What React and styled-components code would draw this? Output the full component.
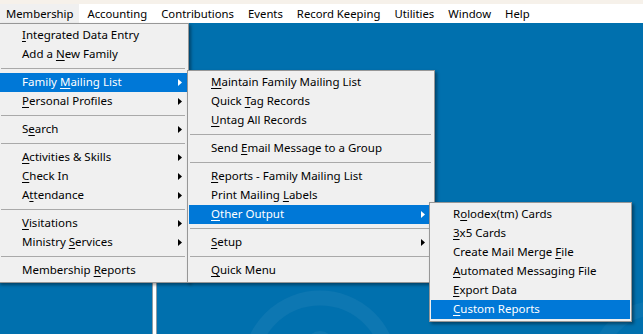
import React from "react";
import styled, { createGlobalStyle } from "styled-components";

const GlobalStyle = createGlobalStyle`
  html, body { margin: 0; padding: 0; background: #0070ae; }
  body { font-family: "Noto Sans", "Open Sans", sans-serif; font-size: 11.5px; color: #000; }
  * { box-sizing: border-box; }
`;

const Screen = styled.div`
  position: relative;
  width: 643px;
  height: 334px;
  overflow: hidden;
  display: flex;
  flex-direction: column;
  background: #0070ae;
`;

const TitleStrip = styled.div`
  flex: none;
  height: 4px;
  background: #f6f1ea;
`;

const MenuBar = styled.nav`
  flex: none;
  height: 19px;
  display: flex;
  align-items: stretch;
  gap: 2px;
  background: #ffffff;
  font-size: 11.3px;
`;

const BarItem = styled.div`
  display: flex;
  align-items: center;
  padding: 0 6px;
  white-space: nowrap;
  line-height: 19px;
  background: ${(p) => (p.$open ? "#f0f0f0" : "transparent")};
`;

const Desktop = styled.div`
  flex: 1;
  display: flex;
  min-height: 0;
`;

const SidePane = styled.div`
  flex: none;
  width: 152px;
  background: #0070ae;
`;

const Divider = styled.div`
  flex: none;
  width: 5px;
  background: #ffffff;
  border-left: 1px solid #8d9ba6;
  border-right: 1px solid #8d9ba6;
`;

const MainPane = styled.div`
  flex: 1;
  position: relative;
  overflow: hidden;
  background: #0070ae;
`;

const Watermark = styled.svg`
  position: absolute;
  left: 0;
  top: 0;
  width: 100%;
  height: 100%;
`;

const Menu = styled.div`
  position: absolute;
  left: ${(p) => p.$x}px;
  top: ${(p) => p.$y}px;
  width: ${(p) => p.$w}px;
  padding: 2px 1px;
  background: #f0f0f0;
  border: 1px solid #979797;
  box-shadow: 2px 2px 3px rgba(0, 0, 0, 0.4);
  z-index: ${(p) => p.$z};
`;

const Item = styled.div`
  position: relative;
  height: 19px;
  line-height: 17px;
  padding-left: 22px;
  white-space: nowrap;
  color: ${(p) => (p.$active ? "#ffffff" : "#000000")};
  background: ${(p) => (p.$active ? "#0078d7" : "transparent")};
`;

const Separator = styled.div`
  height: 1px;
  margin: 4px 2px 4px 1px;
  background: #a9a9a9;
`;

const Arrow = styled.svg`
  position: absolute;
  top: 6px;
  right: ${(p) => p.$inset}px;
  width: 4px;
  height: 7px;
  fill: ${(p) => (p.$active ? "#ffffff" : "#000000")};
`;

const Mnemonic = styled.span`
  text-decoration: underline;
  text-underline-offset: 2px;
`;

function Label({ text }) {
  const i = text.indexOf("_");
  if (i < 0) return text;
  return (
    <>
      {text.slice(0, i)}
      <Mnemonic>{text[i + 1]}</Mnemonic>
      {text.slice(i + 2)}
    </>
  );
}

const SEP = "sep";

const membershipMenu = [
  { label: "_Integrated Data Entry" },
  { label: "Add a _New Family" },
  SEP,
  { label: "Family _Mailing List", sub: true, active: true },
  { label: "_Personal Profiles", sub: true },
  SEP,
  { label: "S_earch", sub: true },
  SEP,
  { label: "_Activities & Skills", sub: true },
  { label: "_Check In", sub: true },
  { label: "A_ttendance", sub: true },
  SEP,
  { label: "_Visitations", sub: true },
  { label: "Ministry _Services", sub: true },
  SEP,
  { label: "Membership _Reports" },
];

const mailingMenu = [
  { label: "_Maintain Family Mailing List" },
  { label: "Quick _Tag Records" },
  { label: "_Untag All Records" },
  SEP,
  { label: "Send _Email Message to a Group" },
  SEP,
  { label: "_Reports - Family Mailing List" },
  { label: "Print Mailing _Labels" },
  { label: "_Other Output", sub: true, active: true },
  SEP,
  { label: "_Setup", sub: true },
  SEP,
  { label: "_Quick Menu" },
];

const outputMenu = [
  { label: "R_olodex(tm) Cards" },
  { label: "_3x5 Cards" },
  { label: "Create Mail Merge _File" },
  { label: "_Automated Messaging File" },
  { label: "_Export Data" },
  { label: "_Custom Reports", active: true },
];

const barItems = [
  "Membership",
  "Accounting",
  "Contributions",
  "Events",
  "Record Keeping",
  "Utilities",
  "Window",
  "Help",
];

function DropMenu({ items, x, y, w, z, arrowInset }) {
  return (
    <Menu $x={x} $y={y} $w={w} $z={z}>
      {items.map((it, idx) =>
        it === SEP ? (
          <Separator key={idx} />
        ) : (
          <Item key={idx} $active={it.active}>
            <Label text={it.label} />
            {it.sub && (
              <Arrow $inset={arrowInset} $active={it.active} viewBox="0 0 4 7">
                <polygon points="0,0 4,3.5 0,7" />
              </Arrow>
            )}
          </Item>
        )
      )}
    </Menu>
  );
}

export default function App() {
  return (
    <>
      <GlobalStyle />
      <Screen>
        <TitleStrip />
        <MenuBar>
          {barItems.map((b, i) => (
            <BarItem key={b} $open={i === 0}>
              {b}
            </BarItem>
          ))}
        </MenuBar>
        <Desktop>
          <SidePane />
          <Divider />
          <MainPane>
            <Watermark viewBox="0 0 486 311" preserveAspectRatio="none">
              <circle cx="163" cy="345" r="70" fill="none" stroke="rgba(255,255,255,0.05)" strokeWidth="15" />
              <circle cx="163" cy="322" r="14" fill="rgba(255,255,255,0.05)" />
              <circle cx="500" cy="345" r="60" fill="none" stroke="rgba(255,255,255,0.04)" strokeWidth="14" />
            </Watermark>
          </MainPane>
        </Desktop>
        <DropMenu items={membershipMenu} x={-2} y={23} w={191} z={1} arrowInset={5} />
        <DropMenu items={mailingMenu} x={187} y={70} w={248} z={2} arrowInset={8} />
        <DropMenu items={outputMenu} x={429} y={202} w={203} z={3} arrowInset={5} />
      </Screen>
    </>
  );
}
